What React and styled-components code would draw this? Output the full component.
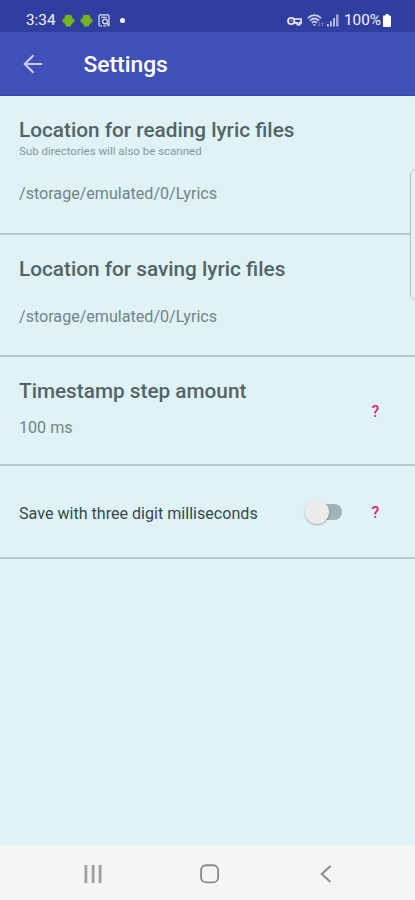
import React from 'react';
import styled, { createGlobalStyle } from 'styled-components';

const GlobalStyle = createGlobalStyle`
  * {
    box-sizing: border-box;
  }

  body {
    margin: 0;
    font-family: Roboto, 'Liberation Sans', sans-serif;
    background: #dff3f7;
  }

  svg {
    display: block;
    flex-shrink: 0;
  }
`;

const Screen = styled.div`
  position: relative;
  display: flex;
  flex-direction: column;
  width: 415px;
  height: 900px;
  overflow: hidden;
  background: #dff3f7;
`;

const StatusBar = styled.div`
  display: flex;
  align-items: center;
  justify-content: space-between;
  height: 32px;
  padding: 9px 24px 0 26px;
  background: #303f9f;
  color: #f1f2fb;
`;

const StatusGroup = styled.div`
  display: flex;
  align-items: center;
  height: 23px;
`;

const StatusText = styled.span`
  width: ${({ $width }) => $width}px;
  font-size: 15.3px;
  line-height: 23px;
  white-space: nowrap;
`;

const AppBar = styled.header`
  display: flex;
  align-items: center;
  height: 64px;
  padding-left: 23px;
  background: #4150b6;
  border-bottom: 1px solid #3a49a8;
`;

const BackButton = styled.button`
  display: flex;
  width: 60.5px;
  padding: 0;
  border: 0;
  background: none;
`;

const AppTitle = styled.h1`
  margin: 3px 0 0;
  color: #fff;
  font-size: 22.8px;
  font-weight: 500;
  line-height: 28px;
`;

const Content = styled.main`
  flex: 1;
`;

const Row = styled.section`
  display: flex;
  align-items: center;
  height: ${({ $height }) => $height}px;
  padding: 0 35px 0 19px;
  border-bottom: 2px solid #b8c7ca;
`;

const RowBody = styled.div`
  flex: 1;
  align-self: ${({ $center }) => ($center ? 'center' : 'flex-start')};
  padding-top: ${({ $center }) => ($center ? '4px' : '21px')};
`;

const RowTitle = styled.h2`
  margin: 0;
  color: #536366;
  font-size: 20.75px;
  font-weight: 500;
  line-height: 26px;
  white-space: nowrap;
`;

const Hint = styled.div`
  height: 16px;
  color: #83979b;
  font-size: 11.5px;
  line-height: 16px;
`;

const Value = styled.div`
  margin-top: ${({ $gap }) => $gap}px;
  color: #728387;
  font-size: 16.1px;
  line-height: 20px;
`;

const Label = styled.div`
  color: #37474a;
  font-size: 16.1px;
  line-height: 20px;
  white-space: nowrap;
`;

const Switch = styled.div`
  display: flex;
  align-items: center;
  width: 34px;
  height: 16px;
  margin-right: 29px;
  border-radius: 8px;
  background: #a0b3b6;
`;

const Thumb = styled.div`
  width: 24px;
  height: 24px;
  margin-left: -3px;
  border-radius: 50%;
  background: #ececec;
  box-shadow: 0 1px 2px rgba(0, 0, 0, 0.3);
`;

const Help = styled.span`
  width: 9px;
  padding-top: 2px;
  color: #e32679;
  font-size: 16px;
  font-weight: 500;
  line-height: 20px;
  text-align: center;
`;

// Handle of the edge panel, floats over the list
const EdgePanel = styled.div`
  position: absolute;
  top: 169px;
  right: -8px;
  width: 13px;
  height: 131px;
  border: 1.5px solid #b5c1c3;
  border-radius: 6px;
  background: #e6f1f3;
`;

const NavBar = styled.nav`
  display: flex;
  align-items: center;
  height: 55px;
  padding: 3px 0 0 84px;
  background: #f5f5f5;
`;

const NavButton = styled.button`
  width: ${({ $width }) => $width}px;
  padding: 0;
  border: 0;
  background: none;
`;

const AndroidIcon = styled(({ className }) => (
  <svg className={className} width="13" height="13" viewBox="0 0 13 13" fill="#78b51c">
    <path d="M2.4 4.8a4.1 4 0 0 1 8.2 0V9.6a1 1 0 0 1-1 1H3.4a1 1 0 0 1-1-1z" />
    <path d="M.6 4.7h2.2v3.8H.6zM10.2 4.7h2.2v3.8h-2.2zM4 10h5v2.6H4z" />
    <path d="M3.4.5l1.2 1.8M9.6.5L8.4 2.3" stroke="#78b51c" strokeWidth=".8" />
  </svg>
))`
  margin-right: 5px;
`;

const FileSearchIcon = () => (
  <svg width="12" height="13" viewBox="0 0 12 13" fill="none" stroke="#e2e5f7" strokeWidth="1.2">
    <path d="M4 12H2.2Q1 12 1 10.8V2Q1 .8 2.2.8H9.8Q11 .8 11 2V11.5" />
    <path d="M3.3 3.3H8.6" />
    <circle cx="7" cy="7.5" r="2.4" />
    <path d="M8.7 9.3L11.3 12.2M5 12H8.5" />
  </svg>
);

const Dot = styled.span`
  width: 5px;
  height: 5px;
  margin-left: 10px;
  border-radius: 50%;
  background: #fff;
`;

const KeyIcon = () => (
  <svg width="15" height="10" viewBox="0 0 15 10" fill="none" stroke="#e8eafa" strokeWidth="1.8">
    <circle cx="4.2" cy="5" r="3.2" />
    <circle cx="4.2" cy="5" r=".7" fill="#e8eafa" stroke="none" />
    <path d="M7 3H14V6.8H12.8V8.6H10.4V6.8H7" strokeWidth="1.7" />
  </svg>
);

const WifiIcon = styled(({ className }) => (
  <svg className={className} width="17" height="13" viewBox="0 0 17 13" fill="none" stroke="#c9cef0">
    <path d="M.8 4.2Q7.5-2 14.2 4.2M3 6.6Q7.5 2.4 12 6.6M5 8.8Q7.5 6.6 10 8.8" strokeWidth="1.7" />
    <path d="M5.8 10.2L7.5 12.2 9 10.2z" fill="#d7dbf4" stroke="none" />
    <path d="M12.2 8v4M11 10.8l1.2 1.4 1.2-1.4M15.5 12.2V8.5M14.4 9.6l1.1-1.2 1.1 1.2" stroke="#7e88cc" strokeWidth=".8" />
  </svg>
))`
  margin-left: 5px;
`;

const SignalIcon = styled(({ className }) => (
  <svg className={className} width="12" height="13" viewBox="0 0 12 13" fill="#c9cef0">
    <path d="M0 10h1.7v2.5H0zM3.1 7.3h1.7v5.2H3.1zM6.2 4h1.7v8.5H6.2z" />
    <path d="M9.5.9h1.6v11.2H9.5z" fill="#8791d0" stroke="#c0c6eb" strokeWidth=".7" />
  </svg>
))`
  margin: 0 5px 0 3px;
`;

const BatteryIcon = styled(({ className }) => (
  <svg className={className} width="8" height="13" viewBox="0 0 8 13" fill="#fff">
    <path d="M2.5 0h3v1.6H7a1 1 0 0 1 1 1V12a1 1 0 0 1-1 1H1a1 1 0 0 1-1-1V2.6a1 1 0 0 1 1-1h1.5z" />
  </svg>
))`
  margin-left: 1px;
`;

const BackArrow = () => (
  <svg width="20" height="20" viewBox="0 0 20 20" fill="none" stroke="#c6cbea" strokeWidth="2.2">
    <path d="M19.2 10H2M10.5 1.3L1.8 10l8.7 8.7" />
  </svg>
);

const RecentsIcon = () => (
  <svg width="19" height="18" viewBox="0 0 19 18" fill="#a0a0a0">
    <path d="M.5 0h2.8v18H.5zM7.7 0h2.8v18H7.7zM14.7 0h2.8v18h-2.8z" />
  </svg>
);

const HomeIcon = () => (
  <svg width="20" height="20" viewBox="0 0 20 20" fill="none" stroke="#8c8c8c" strokeWidth="1.9">
    <rect x="1.1" y="1.2" width="17" height="17.2" rx="5" />
  </svg>
);

const NavBackIcon = () => (
  <svg width="12" height="18" viewBox="0 0 12 18" fill="none" stroke="#8c8c8c" strokeWidth="1.9">
    <path d="M10.5 1L1.8 9l8.7 8" />
  </svg>
);

const folders = [
  {
    title: 'Location for reading lyric files',
    hint: 'Sub directories will also be scanned',
    path: '/storage/emulated/0/Lyrics',
    height: 139,
    gap: 25,
  },
  {
    title: 'Location for saving lyric files',
    path: '/storage/emulated/0/Lyrics',
    height: 122,
    gap: 25,
  },
];

const App = () => {
  return (
    <Screen>
      <GlobalStyle />
      <StatusBar>
        <StatusGroup>
          <StatusText $width={36}>3:34</StatusText>
          <AndroidIcon />
          <AndroidIcon />
          <FileSearchIcon />
          <Dot />
        </StatusGroup>
        <StatusGroup>
          <KeyIcon />
          <WifiIcon />
          <SignalIcon />
          <StatusText $width={38}>100%</StatusText>
          <BatteryIcon />
        </StatusGroup>
      </StatusBar>

      <AppBar>
        <BackButton aria-label="Back">
          <BackArrow />
        </BackButton>
        <AppTitle>Settings</AppTitle>
      </AppBar>

      <Content>
        {folders.map((folder) => (
          <Row key={folder.title} $height={folder.height}>
            <RowBody>
              <RowTitle>{folder.title}</RowTitle>
              {folder.hint && <Hint>{folder.hint}</Hint>}
              <Value $gap={folder.gap}>{folder.path}</Value>
            </RowBody>
          </Row>
        ))}

        <Row $height={109}>
          <RowBody>
            <RowTitle>Timestamp step amount</RowTitle>
            <Value $gap={14}>100 ms</Value>
          </RowBody>
          <Help>?</Help>
        </Row>

        <Row $height={93}>
          <RowBody $center>
            <Label>Save with three digit milliseconds</Label>
          </RowBody>
          <Switch>
            <Thumb />
          </Switch>
          <Help>?</Help>
        </Row>
      </Content>

      <EdgePanel />

      <NavBar>
        <NavButton $width={116} aria-label="Recents">
          <RecentsIcon />
        </NavButton>
        <NavButton $width={120} aria-label="Home">
          <HomeIcon />
        </NavButton>
        <NavButton $width={12} aria-label="Back">
          <NavBackIcon />
        </NavButton>
      </NavBar>
    </Screen>
  );
};

export default App;
